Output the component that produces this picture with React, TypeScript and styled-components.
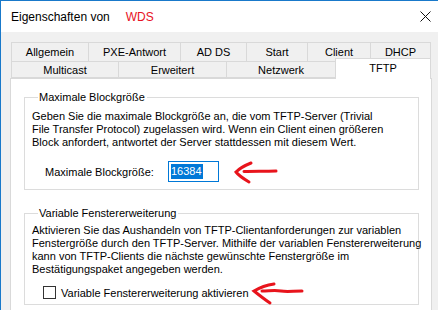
import React from "react";
import styled, { createGlobalStyle } from "styled-components";

const GlobalStyle = createGlobalStyle`
  html, body { margin: 0; padding: 0; background: #ffffff; }
  body { font-family: "Liberation Sans", Arial, sans-serif; }
`;

const Window = styled.div`
  width: 438px;
  height: 310px;
  box-sizing: border-box;
  border-top: 1px solid #1979ca;
  border-left: 1px solid #1979ca;
  overflow: hidden;
  display: flex;
  flex-direction: column;
  background: #f0f0f0;
`;

const TitleBar = styled.div`
  height: 31px;
  flex: none;
  background: #ffffff;
  display: flex;
  align-items: center;
  padding-left: 10px;
  font-size: 12px;
  color: #000;
`;

const TitleText = styled.span`
  flex: 1;
  white-space: nowrap;
`;

const Accent = styled.span`
  color: #e81123;
  margin-left: 16px;
`;

const CloseButton = styled.div`
  width: 11px;
  height: 11px;
  margin-right: 7px;
  display: flex;
  align-items: center;
  justify-content: center;
`;

const Body = styled.div`
  flex: 1;
  padding: 10px 6px 0 9px;
  display: flex;
  flex-direction: column;
`;

const TabRow = styled.div<{ $front?: boolean }>`
  display: flex;
  align-items: flex-end;
  height: ${(p) => (p.$front ? "17px" : "19px")};
  margin-left: 1px;
  position: relative;
  z-index: ${(p) => (p.$front ? 2 : 1)};
`;

const Tab = styled.div<{ $w: number; $last?: boolean; $active?: boolean }>`
  box-sizing: border-box;
  width: ${(p) => p.$w}px;
  height: ${(p) => (p.$active ? "21px" : "100%")};
  margin-bottom: ${(p) => (p.$active ? "-1px" : "0")};
  border: 1px solid #d9d9d9;
  border-right: ${(p) => (p.$last ? "1px solid #d9d9d9" : "none")};
  border-bottom: ${(p) => (p.$active ? "none" : "1px solid #d9d9d9")};
  background: ${(p) => (p.$active ? "#ffffff" : "#f0f0f0")};
  display: flex;
  align-items: ${(p) => (p.$active ? "flex-start" : "center")};
  justify-content: center;
  padding-top: ${(p) => (p.$active ? "3px" : "0")};
  font-size: 11px;
  color: #000;
  white-space: nowrap;
`;

const FirstRowTab = styled(Tab)`
  border-bottom: none;
`;

const Panel = styled.div`
  flex: 1;
  background: #ffffff;
  border: 1px solid #d9d9d9;
  border-bottom: none;
  padding: 12px 12px 0 13px;
  display: flex;
  flex-direction: column;
  gap: 17px;
`;

const Group = styled.fieldset<{ $pt: number }>`
  margin: 0;
  padding: ${(p) => p.$pt}px 6px 0 7px;
  border: 1px solid #dcdcdc;
  min-width: 0;
`;

const Legend = styled.legend`
  font-size: 11px;
  line-height: 13px;
  padding: 0 2px 0 1px;
  margin-left: 6px;
  color: #000;
`;

const Para = styled.p`
  margin: 0;
  font-size: 11px;
  line-height: 13px;
  color: #000;
  white-space: nowrap;
`;

const FieldRow = styled.div`
  display: flex;
  align-items: center;
  margin-top: 12px;
  margin-bottom: 7px;
  padding-left: 13px;
  height: 21px;
`;

const FieldLabel = styled.span`
  width: 123px;
  font-size: 11px;
  color: #000;
  white-space: nowrap;
`;

const Input = styled.div`
  box-sizing: border-box;
  width: 51px;
  height: 21px;
  border: 1px solid #0078d7;
  display: flex;
  align-items: center;
  padding-left: 2px;
  font-size: 11px;
`;

const Selected = styled.span`
  background: #0078d7;
  color: #ffffff;
  line-height: 15px;
  padding-right: 1px;
`;

const CheckRow = styled.div`
  display: flex;
  align-items: center;
  margin-top: 10px;
  margin-bottom: 5px;
  padding-left: 11px;
  height: 13px;
`;

const CheckBox = styled.span`
  box-sizing: border-box;
  width: 13px;
  height: 13px;
  border: 1px solid #333333;
  background: #ffffff;
  flex: none;
`;

const CheckLabel = styled.span`
  margin-left: 5px;
  font-size: 11px;
  color: #000;
  white-space: nowrap;
`;

const Arrow = styled.svg<{ $ml: number }>`
  flex: none;
  margin-left: ${(p) => p.$ml}px;
  overflow: visible;
`;

const rows1 = [
  { label: "Allgemein", w: 77 },
  { label: "PXE-Antwort", w: 92 },
  { label: "AD DS", w: 66 },
  { label: "Start", w: 61 },
  { label: "Client", w: 63 },
  { label: "DHCP", w: 61 },
];

const rows2 = [
  { label: "Multicast", w: 107 },
  { label: "Erweitert", w: 108 },
  { label: "Netzwerk", w: 109 },
  { label: "TFTP", w: 96, active: true },
];

export default function App() {
  return (
    <>
      <GlobalStyle />
      <Window>
        <TitleBar>
          <TitleText>
            Eigenschaften von<Accent>WDS</Accent>
          </TitleText>
          <CloseButton>
            <svg width="11" height="11" viewBox="0 0 11 11">
              <path d="M0.5 0.5 L10.5 10.5 M10.5 0.5 L0.5 10.5" stroke="#111" strokeWidth="1" fill="none" />
            </svg>
          </CloseButton>
        </TitleBar>
        <Body>
          <TabRow>
            {rows1.map((t, i) => (
              <FirstRowTab key={t.label} $w={t.w} $last={i === rows1.length - 1}>
                {t.label}
              </FirstRowTab>
            ))}
          </TabRow>
          <TabRow $front>
            {rows2.map((t, i) => (
              <Tab key={t.label} $w={t.w} $last={i === rows2.length - 1} $active={t.active}>
                {t.label}
              </Tab>
            ))}
          </TabRow>
          <Panel>
            <Group $pt={6}>
              <Legend>Maximale Blockgröße</Legend>
              <Para>
                Geben Sie die maximale Blockgröße an, die vom TFTP-Server (Trivial
                <br />
                File Transfer Protocol) zugelassen wird. Wenn ein Client einen größeren
                <br />
                Block anfordert, antwortet der Server stattdessen mit diesem Wert.
              </Para>
              <FieldRow>
                <FieldLabel>Maximale Blockgröße:</FieldLabel>
                <Input>
                  <Selected>16384</Selected>
                </Input>
                <Arrow $ml={15} width="44" height="22" viewBox="0 0 44 22">
                  <path
                    d="M17 2 C12 4 6 7 2 11 C5 15 10 18 15 21 M10 10.5 C20 10 30 10.5 42 10"
                    stroke="#e8141c"
                    strokeWidth="3"
                    strokeLinecap="round"
                    fill="none"
                  />
                </Arrow>
              </FieldRow>
            </Group>
            <Group $pt={4}>
              <Legend>Variable Fenstererweiterung</Legend>
              <Para>
                Aktivieren Sie das Aushandeln von TFTP-Clientanforderungen zur variablen
                <br />
                Fenstergröße durch den TFTP-Server. Mithilfe der variablen Fenstererweiterung
                <br />
                kann von TFTP-Clients die nächste gewünschte Fenstergröße im
                <br />
                Bestätigungspaket angegeben werden.
              </Para>
              <CheckRow>
                <CheckBox />
                <CheckLabel>Variable Fenstererweiterung aktivieren</CheckLabel>
                <Arrow $ml={4} width="50" height="22" viewBox="0 0 50 22">
                  <path
                    d="M21 2 C14 3 6 6 1 9 C6 13 11 17 17 21 M9 9 C16 9 22 8 28 9 C34 10 40 9 49 9"
                    stroke="#e8141c"
                    strokeWidth="3"
                    strokeLinecap="round"
                    fill="none"
                  />
                </Arrow>
              </CheckRow>
            </Group>
          </Panel>
        </Body>
      </Window>
    </>
  );
}
